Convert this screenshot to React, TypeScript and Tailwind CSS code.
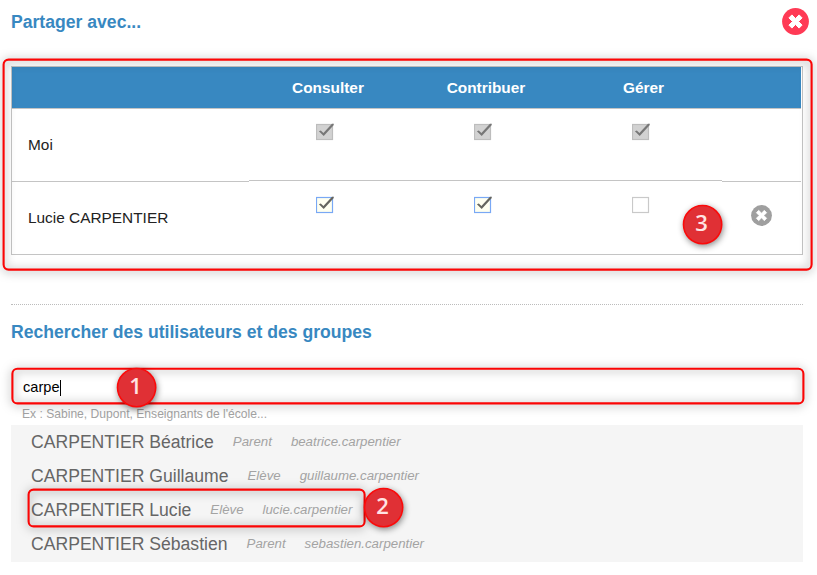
import React from "react";

type Access = "locked" | "on" | "off";

const members: { name: string; rights: Access[]; removable: boolean }[] = [
  { name: "Moi", rights: ["locked", "locked", "locked"], removable: false },
  { name: "Lucie CARPENTIER", rights: ["on", "on", "off"], removable: true },
];

const results = [
  { name: "CARPENTIER Béatrice", role: "Parent", login: "beatrice.carpentier" },
  { name: "CARPENTIER Guillaume", role: "Elève", login: "guillaume.carpentier" },
  { name: "CARPENTIER Lucie", role: "Elève", login: "lucie.carpentier" },
  { name: "CARPENTIER Sébastien", role: "Parent", login: "sebastien.carpentier" },
];

function Check({ state }: { state: Access }) {
  const fill = state === "locked" ? "#d2d2d2" : state === "on" ? "#fffff0" : "#ffffff";
  const stroke = state === "locked" ? "#bdbdbd" : state === "on" ? "#79a8f5" : "#c9c9c9";
  return (
    <svg className="block" width="19" height="18" viewBox="0 0 19 18">
      <rect x="0.5" y="1.5" width="16" height="15" fill={fill} stroke={stroke} strokeWidth="1.2" />
      {state !== "off" && (
        <path
          d="M2.9 8.2 L4.8 7.4 L7.4 10 L16 0.8 L17.9 0.7 L17.6 2.2 L7.7 13 Z"
          fill={state === "locked" ? "#777777" : "#65655f"}
        />
      )}
    </svg>
  );
}

function CloseIcon({ size, color }: { size: number; color: string }) {
  return (
    <svg className="block" width={size} height={size} viewBox="0 0 27 27">
      <circle cx="13.5" cy="13.5" r="13.4" fill={color} />
      <path
        d="M9.9 6.9 L13.5 10.5 L17.1 6.9 L20.1 9.9 L16.5 13.5 L20.1 17.1 L17.1 20.1 L13.5 16.5 L9.9 20.1 L6.9 17.1 L10.5 13.5 L6.9 9.9 Z"
        fill="#fff"
        stroke="#fff"
        strokeWidth="1"
        strokeLinejoin="round"
      />
    </svg>
  );
}

function Frame({ x, y, w, h }: { x: number; y: number; w: number; h: number }) {
  return (
    <rect
      x={x}
      y={y}
      width={w}
      height={h}
      rx="5"
      fill="none"
      stroke="#fb0505"
      strokeWidth="2.1"
      className="[filter:drop-shadow(0px_1px_5px_rgba(0,0,0,0.5))]"
    />
  );
}

function Step({ x, y, n }: { x: number; y: number; n: string }) {
  return (
    <g>
      <circle
        cx={x}
        cy={y}
        r="19.1"
        fill="#e03035"
        stroke="#fb0a0a"
        strokeWidth="1.6"
        className="[filter:drop-shadow(1px_2px_3px_rgba(0,0,0,0.45))]"
      />
      <text
        x={x - 1}
        y={y + 6.5}
        textAnchor="middle"
        fill="#ffe3e3"
        className="font-['Open_Sans',sans-serif] text-[22px] font-semibold"
      >
        {n}
      </text>
    </g>
  );
}

export default function App() {
  return (
    <div className="relative h-[575px] w-[817px] overflow-hidden bg-white font-['Liberation_Sans',Arial,sans-serif]">
      <header className="flex h-[66px] items-start justify-between pr-[8px] pl-[11px]">
        <h1 className="pt-[12px] text-[17.6px] leading-[21px] font-bold text-[#3888c1]">
          <span className="inline-block">Partager avec...</span>
        </h1>
        <button className="pt-[8px]" aria-label="Fermer">
          <CloseIcon size={27} color="#ff3a55" />
        </button>
      </header>

      <section className="ml-[11px] h-[189px] w-[792px] border border-[#c4c4c4] text-[15.4px]">
        <div className="mr-px grid h-[42px] grid-cols-[237px_158px_158px_157px_79px] items-center border-b border-[#c4c4c4] bg-[#3888c1] text-center leading-[20px] font-bold text-white">
          <span />
          <span>Consulter</span>
          <span>Contribuer</span>
          <span>Gérer</span>
          <span />
        </div>
        {members.map((m, i) => (
          <div key={m.name} className="mr-px grid h-[73px] grid-cols-[237px_158px_158px_157px_79px]">
            <div
              className={`flex h-[73px] items-center pl-[16px] text-[#222] ${i === 0 ? "border-b border-[#c4c4c4]" : "pb-[2px]"}`}
            >
              {m.name}
            </div>
            {m.rights.map((r, k) => (
              <div
                key={k}
                className={`flex h-[72px] pt-[14px] pl-[67px] ${i === 0 ? "border-b border-[#c4c4c4]" : ""}`}
              >
                <Check state={r} />
              </div>
            ))}
            <div
              className={`flex h-[73px] justify-center pt-[23px] ${i === 0 ? "border-b border-[#c4c4c4]" : ""}`}
            >
              {m.removable && <CloseIcon size={21} color="#9f9f9f" />}
            </div>
          </div>
        ))}
      </section>

      <section className="mt-[49px] ml-[11px] w-[792px] border-t border-dotted border-[#bcbcbc]">
        <h2 className="mt-[17px] text-[17.6px] leading-[21px] font-bold text-[#3888c1]">
          <span className="inline-block">Rechercher des utilisateurs et des groupes</span>
        </h2>
        <div className="mt-[27px] flex h-[35px] items-center pl-[12px] text-[14.6px] text-black">
          <span>carpe</span>
          <span className="h-[16px] w-px bg-black" />
        </div>
        <p className="h-[20px] pl-[11px] text-[12.1px] leading-[18px] text-[#a3a3a3]">
          <span>Ex : Sabine, Dupont, Enseignants de l'école...</span>
        </p>
        <ul className="h-[137px] bg-[#f5f5f5] pl-[20px]">
          {results.map((r) => (
            <li key={r.login} className="flex h-[34px] items-center whitespace-nowrap">
              <span className="text-[17.6px] text-[#666]">{r.name}</span>
              <em className="ml-[19px] text-[13.25px] text-[#a3a3a3]">{r.role}</em>
              <em className="ml-[19px] text-[13.25px] text-[#a3a3a3]">{r.login}</em>
            </li>
          ))}
        </ul>
      </section>

      <svg className="pointer-events-none absolute inset-0" width="817" height="575" viewBox="0 0 817 575">
        <Frame x={3.6} y={59.6} w={808} h={210} />
        <Frame x={12.4} y={368.8} w={791} h={34.6} />
        <Frame x={28.6} y={489.6} w={336} h={36.8} />
        <Step x={136.6} y={387.6} n="1" />
        <Step x={383.6} y={507.6} n="2" />
        <Step x={702.6} y={224.6} n="3" />
      </svg>
    </div>
  );
}
